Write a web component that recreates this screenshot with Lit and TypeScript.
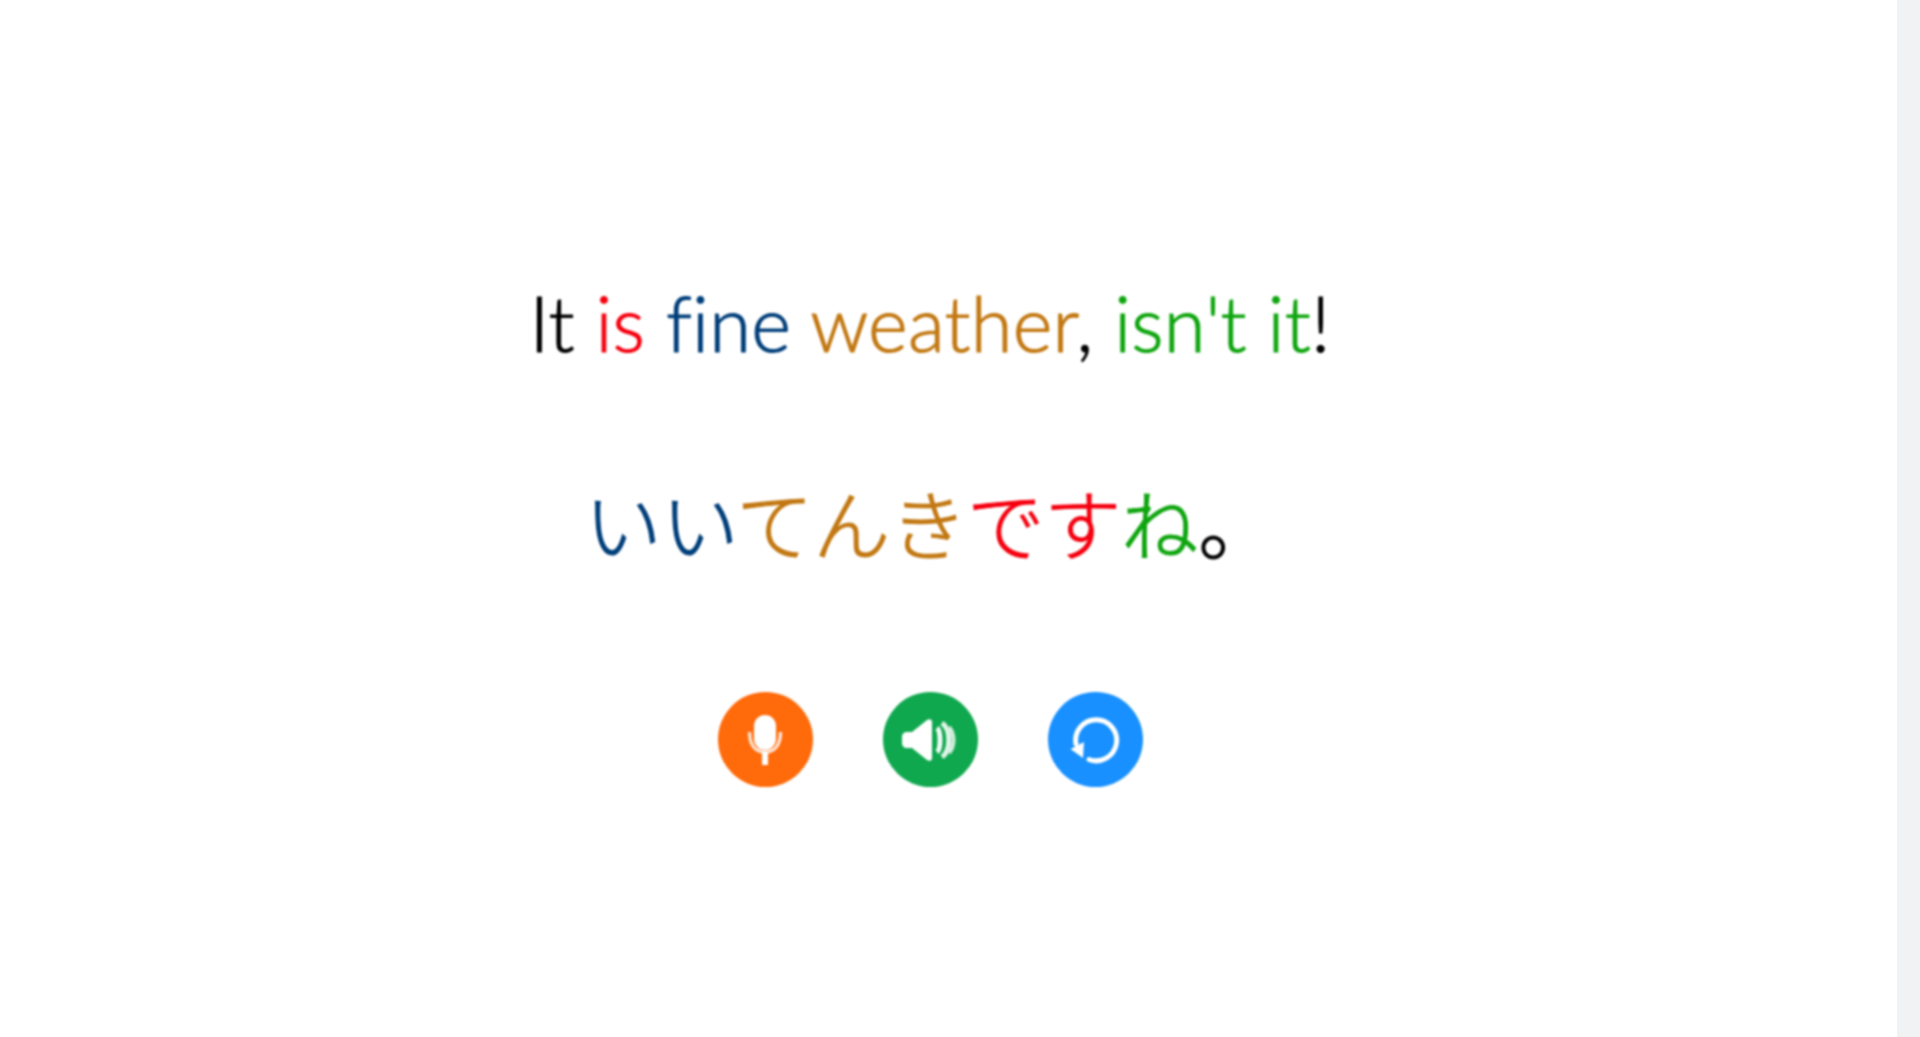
import { LitElement, html, css } from "lit";
import { customElement } from "lit/decorators.js";

@customElement("app-root")
export class AppRoot extends LitElement {
  static styles = css`
    :host {
      display: flex;
      height: 100vh;
      overflow: hidden;
      background: #fff;
      font-family: Lato, "Noto Sans CJK JP", sans-serif;
    }
    .main {
      flex: 1;
      box-sizing: border-box;
      padding: 280px 37px 0 0;
      display: flex;
      flex-direction: column;
      align-items: center;
      filter: blur(1px);
    }
    .scroll {
      width: 23px;
      background: #f1f2f4;
    }
    .line {
      color: #000;
      white-space: nowrap;
    }
    .en {
      font-size: 76px;
      line-height: 86px;
      font-weight: 300;
      letter-spacing: 0.2px;
      font-variant-ligatures: none;
      -webkit-text-stroke: 1.1px currentColor;
    }
    .ja {
      margin-top: 113px;
      font-family: "Noto Sans CJK JP", sans-serif;
      font-size: 77px;
      line-height: 86px;
      font-weight: 300;
      -webkit-text-stroke: 1.1px currentColor;
    }
    .r { color: #f5000f; }
    .b { color: #003f7a; }
    .o { color: #c27812; }
    .g { color: #0fa50f; }
    .btns {
      margin-top: 127px;
      display: flex;
      gap: 70px;
    }
    .btn {
      width: 95px;
      height: 95px;
      border: 0;
      padding: 0;
      border-radius: 50%;
      display: flex;
      align-items: center;
      justify-content: center;
    }
    .mic { background: #ff6a0a; }
    .spk { background: #10a84f; }
    .rep { background: #1890ff; }
    svg { display: block; }
  `;

  render() {
    return html`
      <div class="main">
        <div class="line en">It <span class="r">is</span> <span class="b">fine</span> <span class="o">weather</span>, <span class="g">isn't it</span>!</div>
        <div class="line ja"><span class="b">いい</span><span class="o">てんき</span><span class="r">です</span><span class="g">ね</span>。</div>
        <div class="btns">
          <div class="btn mic">
            <svg width="40" height="56" viewBox="0 0 40 56" fill="none">
              <rect x="9" y="3" width="22" height="35" rx="11" fill="#fff" />
              <path d="M4.500 20c0 13 6 20 15.500 20s15.500-7 15.500-20" stroke="#ffe3d1" stroke-width="3.500" />
              <rect x="17" y="40" width="6" height="13" fill="#fff" />
            </svg>
          </div>
          <div class="btn spk">
            <svg width="56" height="44" viewBox="0 0 56 44" fill="none">
              <path d="M0 19c0-3 2-5 5-5h5L25 2c2-1.500 5-1 5 2v36c0 3-3 3.500-5 2L10 30H5c-3 0-5-2-5-5z" fill="#fff" />
              <path d="M35 10c4 3 4 21 0 24" stroke="#fff" stroke-width="5" opacity=".95" />
              <path d="M40 5c9 6 9 28 0 34" stroke="#e2f4e9" stroke-width="5" />
              <path d="M47 9c6 7 6 19 0 26" stroke="#cfeedc" stroke-width="4" />
            </svg>
          </div>
          <div class="btn rep">
            <svg width="50" height="50" viewBox="0 0 50 50" fill="none">
              <path d="M19 44.500A20.500 20.500 0 1 0 6 29" stroke="#fff" stroke-width="5" stroke-linecap="round" />
              <path d="M0.500 34L14 27L13 43z" fill="#fff" />
            </svg>
          </div>
        </div>
      </div>
      <div class="scroll"></div>
    `;
  }
}
